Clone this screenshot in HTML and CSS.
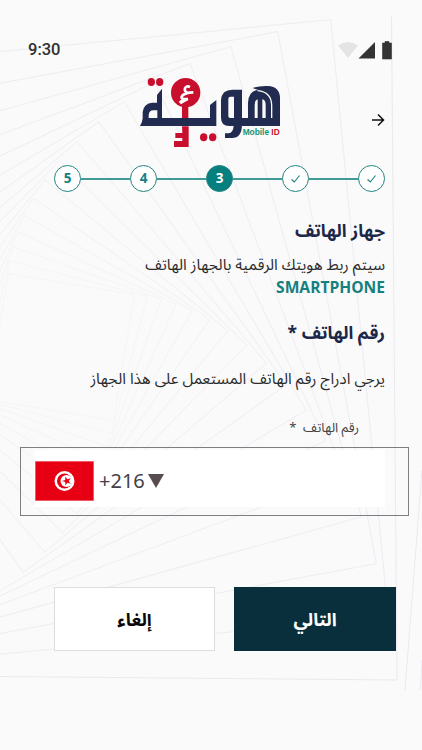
FILE: index.html
```html
<!DOCTYPE html>
<html lang="ar" dir="rtl">
<head>
<meta charset="utf-8">
<meta name="viewport" content="width=device-width, initial-scale=1">
<title>Mobile ID</title>
<link rel="stylesheet" href="styles.css">
</head>
<body>
<svg class="backdrop" width="422" height="750" viewBox="0 0 422 750" aria-hidden="true">
  <defs><clipPath id="area"><rect x="0" y="16" width="422" height="674"/></clipPath></defs>
  <g clip-path="url(#area)">
    <g id="spiral" fill="none" stroke="#ebebf2"></g>
    <path d="M391.500 15L397 680L0 676.500M422 470L405 690M422 660L420.500 690" fill="none" stroke="#e9e9f0"/>
  </g>
</svg>
<main class="screen">
  <div class="status" dir="ltr">
    <span class="time">9:30</span>
    <svg width="56" height="20" viewBox="0 0 56 20" aria-hidden="true">
      <path d="M1 5.500Q11 -1.500 21 5.500L11 18Z" fill="#e4e4e4"/>
      <path d="M38 2V18.500H21.500Z" fill="#333"/>
      <path d="M45.500 3H48V1.500H52V3H54.500V19H45.500Z" fill="#333" stroke="#333" stroke-width=".6" stroke-linejoin="round"/>
    </svg>
  </div>
  <header class="brand" dir="ltr">
    <svg class="logo" width="160" height="80" viewBox="0 0 480 240" role="img" aria-label="هوية Mobile ID">
      <g fill="#222c50">
        <path fill-rule="evenodd" d="M30 168Q37 158 38 145V126Q41 100 67 98H81V75L96 56V144H240V105L259 90V168ZM56 144H82V121H70Q57 121 56 136Z"/>
        <path fill-rule="evenodd" d="M273 143V90Q275 59 307 59H336V165Q335 204 306 204H285V190H296Q309 189 311 168H298Q273 168 273 143ZM295 83V139Q295 144 301 144H312V80H301Q295 80 295 86Z"/>
        <path fill-rule="evenodd" d="M336 144H354V98Q356 62 385 60L368 54Q386 47 414 48Q450 50 450 85V168H336ZM374 144H383V88Q374 90 374 106ZM397 144H407V104Q407 90 397 88Z"/>
      </g>
      <path d="M383 62Q424 66 425 106V144" fill="none" stroke="#fafafa" stroke-width="4"/>
      <g fill="#c8102e">
        <ellipse cx="64" cy="36" rx="11" ry="12"/><ellipse cx="89" cy="36" rx="11" ry="12"/>
        <circle cx="167" cy="68" r="44"/>
        <path d="M156 105H175V144H156ZM156 169H176V231H132V213H157V204H136V189H157Z"/>
        <ellipse cx="221" cy="202" rx="11" ry="12"/><ellipse cx="248" cy="202" rx="11" ry="12"/>
      </g>
      <path d="M180 51Q169 46 165 55Q162 65 172 67M190 67Q166 67 157 77Q151 85 160 87H174" fill="none" stroke="#fff" stroke-width="8"/>
      <path d="M146 95L160 84L176 89L153 103Z" fill="#fff"/>
      <text x="338" y="195" class="logo-mobile">Mobile</text>
      <text x="424" y="195" class="logo-id">ID</text>
    </svg>
    <svg class="back" width="14" height="14" viewBox="0 0 14 14" aria-hidden="true"><path d="M1 7H12.300M7 1.500L12.500 7L7 12.500" fill="none" stroke="#111" stroke-width="1.500"/></svg>
  </header>
  <ol class="steps">
    <li class="step"><svg width="11" height="10" viewBox="0 0 11 10"><path d="M1.500 5.500L4.300 8L9.500 1.500"/></svg></li>
    <li class="line"></li>
    <li class="step"><svg width="11" height="10" viewBox="0 0 11 10"><path d="M1.500 5.500L4.300 8L9.500 1.500"/></svg></li>
    <li class="line"></li>
    <li class="step current">3</li>
    <li class="line"></li>
    <li class="step">4</li>
    <li class="line"></li>
    <li class="step">5</li>
  </ol>
  <section class="copy">
    <h1>جهاز الهاتف</h1>
    <p class="info">سيتم ربط هويتك الرقمية بالجهاز الهاتف</p>
    <p class="device">SMARTPHONE</p>
    <h2>رقم الهاتف *</h2>
    <p class="hint">يرجي ادراج رقم الهاتف المستعمل على هذا الجهاز</p>
  </section>
  <div class="label">رقم الهاتف &nbsp;*</div>
  <div class="field" dir="ltr">
    <div class="input">
      <svg class="flag" width="59" height="40" viewBox="0 0 59 40" aria-hidden="true">
        <path d="M.5.500H58.500V39.500H.5Z" fill="#e70013" stroke="#f05a66"/>
        <circle cx="29.500" cy="20" r="10" fill="#fff"/><circle cx="29.500" cy="20" r="7.500" fill="#e70013"/><circle cx="31.500" cy="20" r="6" fill="#fff"/>
        <path d="M27 20L30.300 18.900V15.500L32.400 18.200L35.700 17.200L33.700 20L35.700 22.800L32.400 21.800L30.300 24.500V21.100Z" fill="#e70013"/>
      </svg>
      <span class="code">+216</span>
      <span class="caret"></span>
    </div>
  </div>
  <div class="actions">
    <button class="next">التالي</button>
    <button class="cancel">إلغاء</button>
  </div>
</main>
<script src="spiral.js"></script>
</body>
</html>
```
FILE: styles.css
```css
* { box-sizing: border-box; }
body {
  margin: 0;
  width: 422px;
  height: 750px;
  overflow: hidden;
  background: #fafafa;
  color: #2b2b2b;
  font-family: "Noto Sans", "Noto Sans Arabic", "Open Sans", sans-serif;
}
.backdrop { position: absolute; left: 0; top: 0; }
.screen { position: relative; height: 750px; }
.status {
  display: flex;
  align-items: center;
  justify-content: space-between;
  height: 70px;
  padding: 29px 29px 0 28px;
}
.time { font: 500 16.5px/20px Roboto, sans-serif; color: #303030; }
.brand {
  display: flex;
  align-items: center;
  justify-content: space-between;
  height: 80px;
  padding: 0 37px 0 130px;
}
.logo-mobile, .logo-id { font: bold 25px "Liberation Sans", sans-serif; fill: #159477; }
.logo-id { fill: #c8102e; }
.back { margin-top: 20px; }
.steps {
  display: flex;
  align-items: center;
  list-style: none;
  margin: 15px 37px 0 54px;
  padding: 0;
}
.step {
  display: flex;
  align-items: center;
  justify-content: center;
  width: 27px;
  height: 27px;
  border: 1px solid #218582;
  border-radius: 50%;
  background: #fff;
  color: #148080;
  font: bold 13.5px/25px "Open Sans", sans-serif;
}
.step.current { background: #077f7e; color: #fff; }
.step path { fill: none; stroke: #218582; stroke-width: 1.200; }
.line { flex: 1; height: 2px; background: #409b98; }
.copy { padding: 0 37px; height: 222px; }
h1, h2, p { margin: 0; white-space: nowrap; }
h1, h2 { color: #1d2748; font-size: 17.6px; font-weight: 700; line-height: 30px; }
h1 { padding-top: 23px; }
.info { font-size: 15.45px; line-height: 24px; margin-top: 7px; }
.device { font-family: "Open Sans", sans-serif; font-size: 15.6px; line-height: 22px; font-weight: 700; color: #158080; }
h2 { margin-top: 19px; }
.hint { font-size: 15.45px; line-height: 24px; margin-top: 19px; }
.label { padding-right: 63px; height: 33px; font-size: 13px; line-height: 26px; color: #444; }
.field {
  width: 389px;
  height: 69px;
  margin: 0 13px;
  border: 1px solid #7d7d82;
  padding: 2px 23px 8px 13px;
}
.input { display: flex; align-items: center; height: 57px; background: #fff; padding-left: 1px; padding-top: 5px; }
.code { font-size: 20px; line-height: 28px; margin-left: 5px; color: #444149; }
.caret { border: 8.5px solid transparent; border-top: 14px solid #574c4d; border-bottom: 0; margin-left: 3px; }
.actions { display: flex; gap: 19px; padding-right: 26px; margin-top: 71px; }
button { height: 64px; padding: 0; font: bold 18px/30px "Noto Sans", "Noto Sans Arabic", sans-serif; }
.next { width: 162px; border: 0; background: #092f3c; color: #fff; }
.cancel { width: 161px; border: 1px solid #ddd; background: #fff; color: #090909; }
```
FILE: spiral.js
```js
// Nested squares, each turned five degrees and scaled down from the last.
const spiral = document.getElementById("spiral");
for (let k = 1; k <= 16; k++) {
  const side = 665 * Math.pow(0.902, k);
  const r = document.createElementNS("http://www.w3.org/2000/svg", "rect");
  r.setAttribute("x", 61 - side / 2);
  r.setAttribute("y", 347 - side / 2);
  r.setAttribute("width", side);
  r.setAttribute("height", side);
  r.setAttribute("opacity", 1 - k * 0.045);
  r.setAttribute("transform", `rotate(${-0.5 - 5 * k} 61 347)`);
  spiral.appendChild(r);
}
```
